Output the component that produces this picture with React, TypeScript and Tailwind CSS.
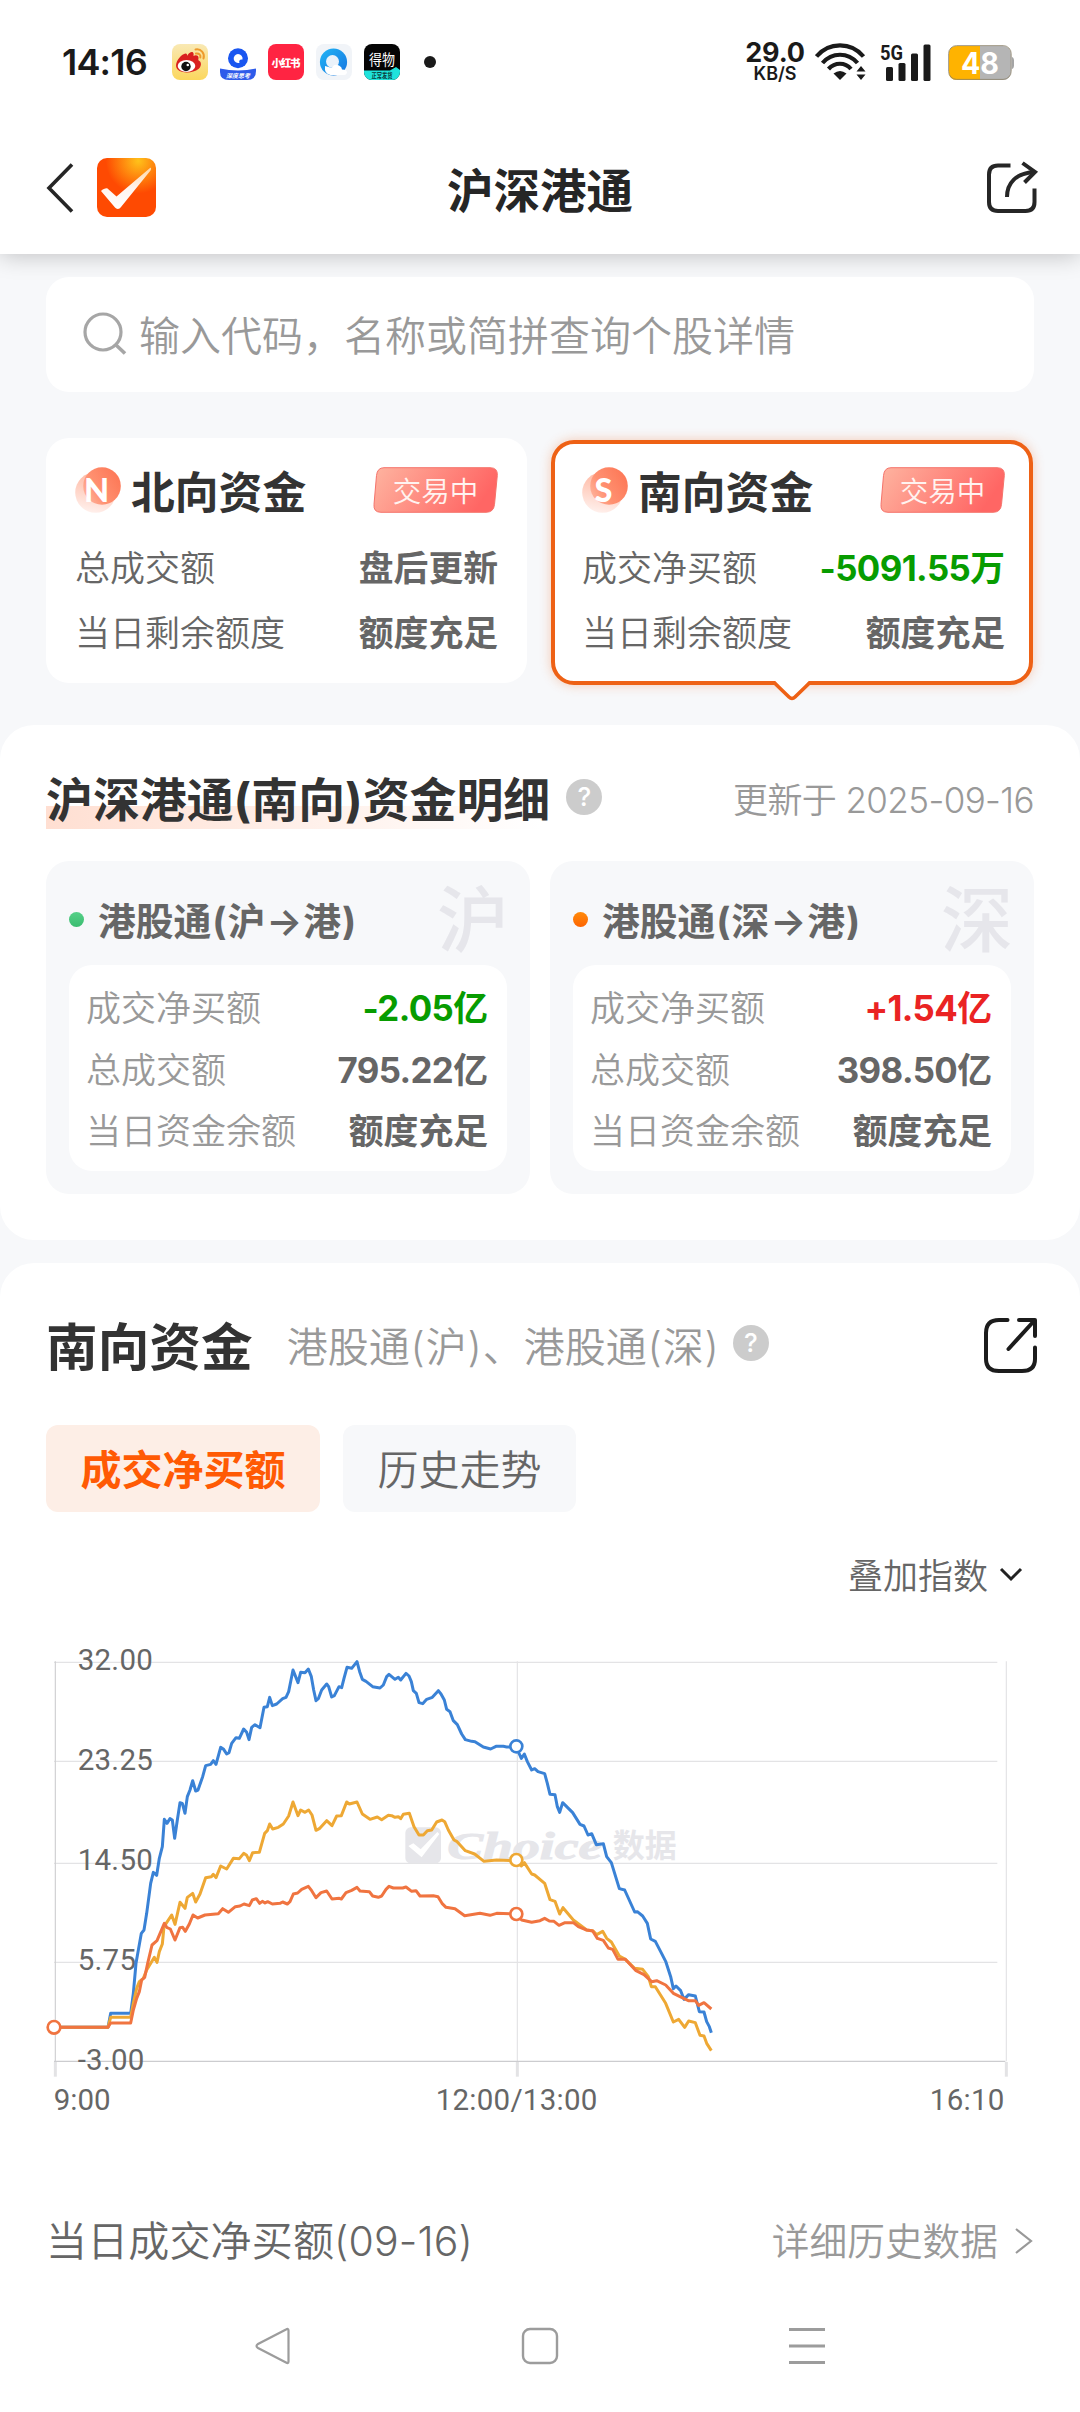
import React from 'react';

const FONT = "font-['Inter','Noto_Sans_CJK_SC',sans-serif]";

/* ---------- status bar ---------- */

function WeiboIcon() {
  return (
    <svg width="36" height="36" viewBox="0 0 36 36">
      <defs>
        <linearGradient id="wb" x1="0" y1="0" x2="0" y2="1">
          <stop offset="0" stopColor="#f9e9b4" />
          <stop offset="1" stopColor="#fbd75d" />
        </linearGradient>
      </defs>
      <rect width="36" height="36" rx="8" fill="url(#wb)" />
      <path d="M4 22C4 16 10 10 13.500 9.500C15 9.500 15.500 11 15.300 12C17 8 20 7.500 21 8.500C22 9.500 21.500 11 21.500 12C24 10.500 27 11.500 26.500 14.500C26 16 26.500 16.500 27.500 17C30 19 29 23 26.500 25C20 30 5 30 4 22Z" fill="#d9201f" />
      <ellipse cx="14.500" cy="22" rx="8.800" ry="6" fill="#fff" />
      <circle cx="14" cy="22.500" r="4.700" fill="#111" />
      <circle cx="15.800" cy="21" r="1.300" fill="#fff" />
      <path d="M23.500 5.500C29 4.500 33 9 31.500 14.500M24 9.500C27 9 29 11 28.300 13.500" fill="none" stroke="#ee9a2c" strokeWidth="2" strokeLinecap="round" />
    </svg>
  );
}

function ExamIcon() {
  return (
    <svg width="36" height="36" viewBox="0 0 36 36">
      <circle cx="18" cy="14.200" r="10" fill="#1a56f0" />
      <path d="M18 10A4.500 4.500 0 1 0 19.500 18.800C18.500 16.500 20 15 22.500 15.500A4.600 4.600 0 0 0 18 10Z" fill="#fff" />
      <path d="M0 24.500Q18 28.500 36 24.500V27Q36 36 27 36H9Q0 36 0 28Z" fill="#2e5bea" />
      <text x="18" y="34.200" fontSize="6" fontWeight="700" fontStyle="italic" fill="#fff" textAnchor="middle" fontFamily="Noto Sans CJK SC">深度思考</text>
    </svg>
  );
}

function RedIcon() {
  return (
    <svg width="36" height="36" viewBox="0 0 36 36">
      <rect width="36" height="36" rx="8" fill="#ff2442" />
      <text x="18" y="22.500" fontSize="10.500" fontWeight="900" fill="#fff" textAnchor="middle" textLength="29" fontFamily="Noto Sans CJK SC">小红书</text>
    </svg>
  );
}

function BrowserIcon() {
  return (
    <svg width="36" height="36" viewBox="0 0 36 36">
      <defs>
        <linearGradient id="qb" x1="0" y1="0" x2="1" y2="1">
          <stop offset="0" stopColor="#22b6f5" />
          <stop offset="1" stopColor="#1673e0" />
        </linearGradient>
      </defs>
      <rect width="36" height="36" rx="8" fill="#f1f4f8" />
      <circle cx="17.500" cy="18" r="13.600" fill="url(#qb)" />
      <circle cx="16.500" cy="17.500" r="6.500" fill="#eaf2fa" />
      <path d="M14.500 31Q8 30 9 22L16 24Q18 19 23 21.500Q26 23 26 25.500Q31 25.500 31 28.500Q30.500 31 28 31Z" fill="#fff" />
    </svg>
  );
}

function DewuIcon() {
  return (
    <svg width="36" height="36" viewBox="0 0 36 36">
      <defs>
        <clipPath id="dw"><rect width="36" height="36" rx="8" /></clipPath>
      </defs>
      <g clipPath="url(#dw)">
        <rect width="36" height="36" fill="#050505" />
        <path d="M0 26.500H26L32 23L36 26V36H0Z" fill="#1fe3dc" />
        <text x="18" y="20.500" fontSize="15" fill="#fff" textAnchor="middle" textLength="26" lengthAdjust="spacingAndGlyphs" fontFamily="Noto Sans CJK SC">得物</text>
        <text x="18" y="33.500" fontSize="6.500" fontWeight="700" fill="#0b3b3a" textAnchor="middle" textLength="21" lengthAdjust="spacingAndGlyphs" fontFamily="Noto Sans CJK SC">正常发货</text>
      </g>
    </svg>
  );
}

function StatusBar() {
  return (
    <div className="flex h-[124px] items-center pl-[62px] pr-[66px] text-[#1a1a1a]">
      <span className="w-[110px] text-[36px] font-semibold leading-[36px] tracking-[-0.8px]">14:16</span>
      <div className="flex items-center gap-[12px]">
        <WeiboIcon />
        <ExamIcon />
        <RedIcon />
        <BrowserIcon />
        <DewuIcon />
      </div>
      <span className="ml-[24px] size-[12px] rounded-full bg-[#1a1a1a]" />
      <div className="ml-auto flex items-center">
        <div className="flex w-[60px] flex-col items-center">
          <span className="text-[27px] font-bold leading-[20px] tracking-[-0.2px]">29.0</span>
          <span className="mt-[3px] text-[18px] font-semibold leading-[15px]">KB/S</span>
        </div>
        <svg className="ml-[10px]" width="52" height="38" viewBox="0 0 52 38">
          <g fill="none" stroke="#1a1a1a" strokeWidth="4.200">
            <path d="M1.500 13.500C14 -1.300 36 -1.300 48.500 13.500" />
            <path d="M7.500 20C17 9 33 9 42.500 20" />
            <path d="M13.500 26C20 19 30 19 36 26" />
          </g>
          <path d="M25 37L18.500 30.500Q25 25.500 31.500 30.500Z" fill="#1a1a1a" />
          <path d="M46 23L50.500 28.500H41.500ZM46 37L50.500 31.500H41.500Z" fill="#1a1a1a" />
        </svg>
        <svg className="ml-[13px] overflow-visible" width="54" height="38" viewBox="0 0 54 38">
          <text x="0" y="16.500" fontSize="20.500" fontWeight="700" fill="#1a1a1a" textLength="23" lengthAdjust="spacingAndGlyphs" fontFamily="Roboto">5G</text>
          <rect x="6" y="24" width="7" height="14" rx="1.500" fill="#1a1a1a" />
          <rect x="18.500" y="20" width="7" height="18" rx="1.500" fill="#1a1a1a" />
          <rect x="31" y="10.500" width="7" height="27.500" rx="1.500" fill="#1a1a1a" />
          <rect x="43.500" y="1.500" width="7" height="36.500" rx="1.500" fill="#1a1a1a" />
        </svg>
        <svg className="ml-[14px]" width="66" height="36" viewBox="0 0 66 36">
          <rect x="1" y="2" width="62" height="34" rx="8" fill="#b5b5b5" />
          <path d="M32 2H9Q1 2 1 10V28Q1 36 9 36H32Z" fill="#ffb300" />
          <rect x="0.600" y="1.600" width="62.600" height="33.800" rx="8" fill="none" stroke="#8a8068" strokeWidth="0.800" />
          <path d="M63.500 12.500Q66 13.500 66 16V22Q66 24.500 63.500 25.500Z" fill="#a5a5a5" />
          <text x="32" y="29.800" fontSize="29.500" fontWeight="700" fill="#fff" textAnchor="middle" fontFamily="Inter" textLength="38" lengthAdjust="spacingAndGlyphs">48</text>
        </svg>
      </div>
    </div>
  );
}

/* ---------- nav header ---------- */

function Header() {
  return (
    <div className="relative flex h-[130px] items-center justify-center bg-white">
      <div className="absolute left-[46px] top-[34px] flex items-center">
        <svg width="28" height="52" viewBox="0 0 28 52">
          <path d="M26 2.500L3 26L26 49.500" fill="none" stroke="#262626" strokeWidth="3.600" />
        </svg>
        <svg className="ml-[23px]" width="59" height="59" viewBox="0 0 59 59">
          <defs>
            <radialGradient id="app" cx="0.700" cy="0.050" r="0.550">
              <stop offset="0" stopColor="#ffc21a" />
              <stop offset="1" stopColor="#fe4a02" />
            </radialGradient>
            <linearGradient id="chk" x1="0" y1="0" x2="0" y2="1">
              <stop offset="0" stopColor="#ffd9a8" />
              <stop offset="0.500" stopColor="#fff4ee" />
              <stop offset="1" stopColor="#fff" />
            </linearGradient>
          </defs>
          <rect width="59" height="59" rx="10" fill="url(#app)" />
          <path d="M4 33C6 31 9 30 10.500 30.500L19.500 38.500L53 10C54 9 54.500 11 53.500 12.500L24 49C22.500 51.500 19.500 51.500 18 49.500Z" fill="url(#chk)" />
        </svg>
      </div>
      <h1 className="mt-[4px] text-[46.500px] font-bold leading-[60px] text-[#262626]">沪深港通</h1>
      <svg className="absolute left-[986px] top-[36px]" width="54" height="54" viewBox="0 0 54 54">
        <g fill="none" stroke="#262626" strokeWidth="4" strokeLinejoin="round">
          <path d="M24.500 5.500H12Q3 5.500 3 14.500V42Q3 51 12 51H39.500Q48.500 51 48.500 42V28.500" />
          <path d="M21 37C21 23 30 13 48.500 12" />
          <path d="M36.500 3L49 12L38.500 22.500" strokeLinejoin="miter" />
        </g>
      </svg>
    </div>
  );
}

/* ---------- fund cards ---------- */

function Emblem({ letter }: { letter: string }) {
  const id = `emblem-${letter}`;
  return (
    <svg width="46" height="46" viewBox="0 0 46 46">
      <defs>
        <linearGradient id={id} x1="1" y1="0.200" x2="0" y2="0.800">
          <stop offset="0" stopColor="#fd7655" />
          <stop offset="0.650" stopColor="#ff9272" />
          <stop offset="1" stopColor="#ffb5a0" />
        </linearGradient>
        <linearGradient id={`${id}-b`} x1="0.600" y1="0" x2="0.400" y2="1">
          <stop offset="0" stopColor="#ffb59e" />
          <stop offset="1" stopColor="#fff0ec" />
        </linearGradient>
      </defs>
      <circle cx="20.500" cy="25.500" r="20.300" fill={`url(#${id}-b)`} />
      <circle cx="27" cy="19" r="18.800" fill={`url(#${id})`} />
      <text x="21.500" y="34.500" fontSize="32.500" fontWeight="900" fill="#fff" textAnchor="middle" fontFamily="Lato">{letter}</text>
    </svg>
  );
}

function TradingBadge() {
  return (
    <div className="relative flex h-[46px] w-[125px] items-center justify-center">
      <svg className="absolute inset-0" width="125" height="46" viewBox="0 0 125 46">
        <defs>
          <linearGradient id="badge" x1="0" y1="0" x2="1" y2="0.250">
            <stop offset="0" stopColor="#feb4a0" />
            <stop offset="1" stopColor="#ff6664" />
          </linearGradient>
        </defs>
        <path d="M11 0.700H117Q125 0.700 124.300 8.500L121.500 37.500Q120.700 45.300 113 45.300H8Q0.300 45.300 1 37.500L3.500 8.500Q4.300 0.700 11 0.700Z" fill="url(#badge)" stroke="#f5736b" strokeWidth="1" />
      </svg>
      <span className="relative mt-[4px] text-[28.500px] font-[350] leading-[36px] text-[#fff3f0]">交易中</span>
    </div>
  );
}

type Row = { label: string; value: string; tone?: string };

/** Figures are set slightly tighter than the unit that follows them. */
function Value({ value, tone }: { value: string; tone?: string }) {
  const digits = value.match(/^[-+\d.]+/)?.[0] ?? '';
  return (
    <span className={`text-[34.800px] font-bold ${tone ?? 'text-[#666]'}`}>
      {digits && <span className="tracking-[-0.6px]">{digits}</span>}
      {value.slice(digits.length)}
    </span>
  );
}

function FundCard({ letter, name, rows, active }: { letter: string; name: string; rows: Row[]; active?: boolean }) {
  return (
    <div
      className={
        active
          ? 'relative mt-[2px] h-[245px] w-[482px] rounded-[23px] border-[4px] border-[#ee6115] bg-white pl-[27px] pr-[24px] pt-[23px] shadow-[0_0_12px_rgba(240,97,21,0.3)]'
          : 'h-[245px] w-[481px] rounded-[23px] bg-white pl-[29px] pr-[29px] pt-[29px]'
      }
    >
      <div className="flex h-[46px] items-center">
        <Emblem letter={letter} />
        <span className="ml-[10px] mt-[8px] text-[43.800px] font-bold leading-[46px] text-[#333]">{name}</span>
        <div className="ml-auto">
          <TradingBadge />
        </div>
      </div>
      <div className="mt-[23px] flex flex-col">
        {rows.map((r) => (
          <div key={r.label} className="flex h-[64.500px] items-center justify-between text-[35px] leading-[64px]">
            <span className="font-[350] text-[#666]">{r.label}</span>
            <Value value={r.value} tone={r.tone} />
          </div>
        ))}
      </div>
      {active && (
        <svg className="absolute left-[217px] top-[234px]" width="40" height="24" viewBox="0 0 40 24">
          <path d="M3 0V3L17 19Q20 22 23 19L37 3V0Z" fill="#fff" />
          <path d="M2 4.500L17 19Q20 22 23 19L38 4.500" fill="none" stroke="#ee6115" strokeWidth="3.600" />
        </svg>
      )}
    </div>
  );
}

/* ---------- detail section ---------- */

function Help() {
  return (
    <span className="flex size-[36px] items-center justify-center rounded-full bg-[#ccc] text-[26px] font-medium leading-[36px] text-white">?</span>
  );
}

function ChannelCard({ city, dot, rows }: { city: string; dot: string; rows: Row[] }) {
  return (
    <div className="h-[333px] w-[484px] rounded-[23px] bg-[#f7f8fa] px-[23px]">
      <div className="flex h-[104px] items-center">
        <span className={`mt-[13px] size-[15px] rounded-full ${dot}`} />
        <span className="ml-[14px] mt-[15px] flex text-[37.800px] font-bold leading-[40px] text-[#666]">
          港股通<span className="w-[16px] text-center">(</span>{city}
          <span className="w-[38px] text-center font-semibold">→</span>港<span className="w-[16px] text-center">)</span>
        </span>
        <span className="-mr-[2px] ml-auto mt-[13px] text-[72px] font-medium leading-[80px] text-[#e6e6eb]">{city}</span>
      </div>
      <div className="flex h-[206px] flex-col rounded-[23px] bg-white pl-[17px] pr-[19px] pt-[13px]">
        {rows.map((r) => (
          <div key={r.label} className="flex h-[61.500px] items-center justify-between text-[35px] leading-[61px]">
            <span className="font-[350] text-[#999]">{r.label}</span>
            <Value value={r.value} tone={r.tone} />
          </div>
        ))}
      </div>
    </div>
  );
}

function DetailSection() {
  return (
    <section className="mt-[40px] h-[515px] rounded-[34px] bg-white px-[46px] pt-[43px]">
      <div className="flex h-[64px] items-center">
        <div className="relative">
          <div className="absolute left-0 top-[38px] h-[23px] w-[495px] bg-linear-to-r from-[#ffdfd2] to-white" />
          <h2 className="relative whitespace-nowrap text-[46.900px] font-bold leading-[64px] text-[#333]">沪深港通(南向)资金明细</h2>
        </div>
        <div className="mb-[6px] ml-[16px]">
          <Help />
        </div>
        <span className="ml-auto text-[35px] font-[350] leading-[50px] tracking-[-0.600px] text-[#999]">更新于 2025-09-16</span>
      </div>
      <div className="mt-[29px] flex justify-between">
        <ChannelCard
          city="沪"
          dot="bg-linear-to-b from-[#55d088] to-[#3bbd70]"
          rows={[
            { label: '成交净买额', value: '-2.05亿', tone: 'text-[#079c00]' },
            { label: '总成交额', value: '795.22亿' },
            { label: '当日资金余额', value: '额度充足' },
          ]}
        />
        <ChannelCard
          city="深"
          dot="bg-linear-to-b from-[#ff8a0a] to-[#fd6402]"
          rows={[
            { label: '成交净买额', value: '+1.54亿', tone: 'text-[#ea2323]' },
            { label: '总成交额', value: '398.50亿' },
            { label: '当日资金余额', value: '额度充足' },
          ]}
        />
      </div>
    </section>
  );
}

/* ---------- chart ---------- */

/** Joins the early points with later ones that are measured from x = 1020. */
const series = (early: string, late: string) =>
  early +
  ' ' +
  late
    .split(' ')
    .map((p) => {
      const [x, y] = p.split(',').map(Number);
      return `${x + 1020},${y}`;
    })
    .join(' ');

const BLUE = series(
  '162,1222 324,1222 332,1180 392,1180 400,1120 408,1030 424,940 432,930 440,880 452,790 460,757 470,766 478,715 487,680 493,598 501,610 510,596 517,600 524,655 532,600 540,548 547,550 555,580 562,530 570,510 578,482 587,513 594,510 608,470 617,437 632,433 640,422 648,433 662,382 671,388 680,402 687,398 695,370 708,353 718,355 731,327 740,337 747,359 755,322 765,314 780,323 792,262 802,260 809,232 817,257 830,252 848,236 858,232 866,215 873,180 879,150 894,188 902,157 915,158 925,147 934,170 941,210 948,242 955,236 965,210 980,192 986,200 995,231 1003,227 1017,200 1025,203 1032,175 1041,142 1055,145 1071,125 1079,155 1087,178 1098,184 1118,200 1140,204 1150,195 1160,170 1167,163',
  '165,178 175,172 182,180 198,160 207,168 214,185 220,212 229,220 237,248 248,251 260,238 277,232 295,212 303,222 313,240 320,268 330,275 340,302 352,314 365,342 376,359 395,364 405,365 430,381 452,387 468,379 490,379 500,381 528,380 544,415 553,402 562,425 575,450 584,446 594,455 614,461 622,490 630,523 645,524 652,560 659,577 668,548 680,560 698,578 720,613 732,618 744,645 755,641 769,674 790,671 800,710 814,728 838,806 854,810 884,876 892,875 908,888 922,910 932,957 946,964 962,995 977,1024 992,1070 1000,1106 1008,1098 1022,1112 1032,1138 1046,1124 1066,1128 1078,1175 1092,1176 1100,1205 1108,1220 1114,1238',
);

const YELLOW = series(
  '162,1222 324,1222 332,1192 392,1192 400,1150 410,1105 418,1085 430,1075 440,1050 463,1012 471,1027 478,995 487,972 492,920 515,885 525,913 540,847 555,865 562,832 578,820 587,846 600,822 617,773 634,770 640,763 648,773 662,738 680,747 700,715 718,716 731,700 740,706 748,722 758,698 778,697 794,640 802,632 809,612 818,627 835,622 850,612 866,588 879,546 894,587 902,570 915,577 926,570 936,585 948,631 958,626 980,602 996,617 1010,588 1024,587 1040,546 1048,552 1071,546 1087,582 1110,598 1132,591 1145,599 1165,586',
  '155,587 165,592 175,590 182,596 190,583 208,580 222,620 237,645 250,645 262,632 275,630 290,606 306,600 314,605 325,630 342,660 350,664 376,692 404,702 432,724 470,720 528,722 544,738 553,728 575,762 584,765 614,790 630,839 645,844 659,882 669,863 700,900 740,930 758,932 770,944 788,934 800,955 814,966 838,1008 856,1018 884,1045 908,1048 925,1070 934,1100 946,1100 977,1150 1000,1206 1016,1198 1034,1222 1046,1203 1066,1208 1080,1246 1092,1248 1100,1270 1114,1292',
);

const ORANGE = series(
  '162,1222 324,1222 332,1209 392,1209 400,1170 410,1135 418,1115 425,1080 434,1072 443,1030 456,975 471,962 493,910 500,922 511,927 525,960 540,923 548,922 556,934 568,912 579,885 593,894 615,885 655,881 668,866 685,877 706,860 720,858 732,852 748,857 757,840 769,836 779,850 787,844 795,849 803,845 817,852 840,850 848,846 862,852 870,845 880,822 893,819 905,808 925,799 935,812 948,833 963,818 980,813 996,837 1018,835 1024,837 1038,818 1055,811 1071,802 1080,813 1108,815 1118,828 1135,832 1145,828 1158,808 1167,799',
  '160,804 188,804 198,801 215,814 228,812 240,828 280,827 294,830 306,850 318,862 345,866 374,887 420,880 450,886 470,880 528,882 545,900 575,907 600,902 614,895 628,903 642,904 657,916 675,908 700,908 715,920 740,930 758,933 772,955 790,961 805,984 818,988 834,1018 856,1018 888,1052 912,1064 935,1085 950,1082 977,1095 1000,1120 1020,1130 1045,1142 1066,1142 1076,1156 1092,1148 1114,1167',
);

const Y_LABELS: [string, number][] = [
  ['32.00', 150],
  ['23.25', 450],
  ['14.50', 749],
  ['5.75', 1049],
  ['-3.00', 1351],
];

function Chart() {
  return (
    <svg className="block" width="1080" height="520" viewBox="0 0 3240 1560">
      <g stroke="#e3e3e5" strokeWidth="3.500">
        {[127, 424, 730, 1027].map((y) => (
          <line key={y} x1="162" x2="2992" y1={y} y2={y} />
        ))}
        <line x1="1552" x2="1552" y1="124" y2="1324" />
        <line x1="3019" x2="3019" y1="124" y2="1324" />
      </g>
      <line x1="166" x2="166" y1="124" y2="1324" stroke="#cfcfd1" strokeWidth="3.500" />
      <line x1="162" x2="3016" y1="1324" y2="1324" stroke="#cccccf" strokeWidth="4" />
      <g stroke="#e3e3e5" strokeWidth="9">
        <line x1="166" x2="166" y1="1326" y2="1370" />
        <line x1="1552" x2="1552" y1="1326" y2="1370" />
        <line x1="3019" x2="3019" y1="1326" y2="1370" />
      </g>

      <g fill="#e6e6ea">
        <rect x="1216" y="622" width="107" height="108" rx="16" />
        <path d="M1225 678L1240 670L1262 688L1312 636L1318 642L1265 712Z" fill="#fff" />
        <text x="1342" y="716" fontSize="112" fontWeight="900" fontStyle="italic" fontFamily="Liberation Serif" stroke="#e6e6ea" strokeWidth="3" textLength="465" lengthAdjust="spacingAndGlyphs">Choice</text>
        <text x="1838" y="710" fontSize="96" fontWeight="700" fontFamily="Noto Sans CJK SC">数据</text>
      </g>

      <g fill="#666" fontFamily="Roboto" fontSize="88.500">
        {Y_LABELS.map(([t, y]) => (
          <text key={t} x="233" y={y} letterSpacing="0.800">{t}</text>
        ))}
        <text x="161" y="1469">9:00</text>
        <text x="1550" y="1469" textAnchor="middle" letterSpacing="0.800">12:00/13:00</text>
        <text x="3014" y="1469" textAnchor="end" letterSpacing="0.800">16:10</text>
      </g>

      <g fill="none" strokeWidth="9" strokeLinejoin="round">
        <polyline points={BLUE} stroke="#3a82d6" />
        <polyline points={YELLOW} stroke="#eea834" />
        <polyline points={ORANGE} stroke="#f07440" />
      </g>
      <g fill="#fff" strokeWidth="8">
        <circle cx="1549" cy="379" r="18" stroke="#3a82d6" />
        <circle cx="1549" cy="720" r="18" stroke="#eea834" />
        <circle cx="1549" cy="882" r="18" stroke="#f07440" />
        <circle cx="162" cy="1222" r="19" stroke="#f07440" />
      </g>
    </svg>
  );
}

function TrendSection() {
  return (
    <section className="mt-[23px] h-[1149px] rounded-t-[34px] bg-white pt-[53px]">
      <div className="flex h-[60px] items-center pl-[46px]">
        <h2 className="mt-[2px] text-[51.700px] font-bold leading-[60px] text-[#333]">南向资金</h2>
        <span className="ml-[34px] mt-[2px] flex text-[41px] font-[350] leading-[60px] text-[#999]">
          港股通<span className="w-[16px] text-center">(</span>沪<span className="w-[16px] text-center">)</span>、港股通
          <span className="w-[16px] text-center">(</span>深<span className="w-[16px] text-center">)</span>
        </span>
        <div className="mb-[6px] ml-[13px]">
          <Help />
        </div>
        <svg className="mb-[2px] ml-auto mr-[40px]" width="58" height="58" viewBox="0 0 58 58">
          <g fill="none" stroke="#1c1c1c" strokeWidth="4" strokeLinecap="round" strokeLinejoin="round">
            <path d="M25.500 4H17Q4 4 4 17V43Q4 55 17 55H40Q53 55 53 43V31.500" />
            <path d="M37 4H53V20M52 5L26.500 33" />
          </g>
        </svg>
      </div>
      <div className="mt-[49px] flex gap-[23px] pl-[46px] text-[41px] leading-[90px]">
        <div className="h-[87px] w-[274px] rounded-[12px] bg-[#fdeee6] text-center font-bold text-[#ff5a04]">成交净买额</div>
        <div className="h-[87px] w-[233px] rounded-[12px] bg-[#f7f8fa] text-center font-[350] text-[#666]">历史走势</div>
      </div>
      <div className="mt-[34px] flex h-[60px] items-center justify-end pr-[57px] text-[35px] font-[350] leading-[60px] text-[#666]">
        叠加指数
        <svg className="mb-[3px] ml-[11px]" width="24" height="16" viewBox="0 0 24 16">
          <path d="M2 2L12 12L22 2" fill="none" stroke="#222" strokeWidth="3" />
        </svg>
      </div>
      <div className="mt-[14px]">
        <Chart />
      </div>
      <div className="mt-[71px] flex h-[60px] items-center justify-between pl-[46px] pr-[46px]">
        <span className="text-[41px] font-[350] leading-[60px] tracking-[0.150px] text-[#666]">当日成交净买额(09-16)</span>
        <span className="flex items-center text-[37.700px] font-[350] leading-[60px] text-[#999]">
          详细历史数据
          <svg className="ml-[16px]" width="20" height="26" viewBox="0 0 20 26">
            <path d="M2 1L17 13L2 25" fill="none" stroke="#999" strokeWidth="2.200" />
          </svg>
        </span>
      </div>
    </section>
  );
}

function SystemNav() {
  return (
    <div className="flex h-[132px] shrink-0 items-center gap-[230px] bg-white pl-[254px]">
      <svg width="37" height="38" viewBox="0 0 37 38">
        <path d="M34.500 3.500V34.500Q34.500 37 32 35.500L4 21Q1 19 4 17L32 2.500Q34.500 1 34.500 3.500Z" fill="none" stroke="#9c9c9c" strokeWidth="2.200" />
      </svg>
      <svg width="38" height="38" viewBox="0 0 38 38">
        <rect x="2" y="2" width="34" height="34" rx="7" fill="none" stroke="#9c9c9c" strokeWidth="2.400" />
      </svg>
      <svg width="36" height="38" viewBox="0 0 36 38">
        <path d="M0 2.500H36M0 19H36M0 35.500H36" stroke="#9c9c9c" strokeWidth="3" />
      </svg>
    </div>
  );
}

export default function App() {
  return (
    <div className={`flex h-[2412px] w-[1080px] flex-col overflow-hidden bg-[#f7f8fa] ${FONT}`}>
      <header className="relative shrink-0 bg-white shadow-[0_2px_22px_rgba(0,0,0,0.22)]">
        <StatusBar />
        <Header />
      </header>
      <main className="h-[2026px] shrink-0 overflow-hidden">
        <div className="relative mx-[46px] mt-[23px] flex h-[115px] items-center rounded-[23px] bg-white pl-[36px]">
          <svg width="46" height="46" viewBox="0 0 46 46">
            <circle cx="21" cy="20" r="18" fill="none" stroke="#a6a6a6" strokeWidth="3.200" />
            <path d="M34 33L43 41.500" stroke="#a6a6a6" strokeWidth="3.600" />
          </svg>
          <span className="ml-[11px] mt-[2px] text-[41px] font-[350] leading-[60px] text-[#999]">输入代码，名称或简拼查询个股详情</span>
        </div>
        <div className="mt-[46px] flex justify-between pl-[46px] pr-[47px]">
          <FundCard
            letter="N"
            name="北向资金"
            rows={[
              { label: '总成交额', value: '盘后更新' },
              { label: '当日剩余额度', value: '额度充足' },
            ]}
          />
          <FundCard
            active
            letter="S"
            name="南向资金"
            rows={[
              { label: '成交净买额', value: '-5091.55万', tone: 'text-[#079c00]' },
              { label: '当日剩余额度', value: '额度充足' },
            ]}
          />
        </div>
        <DetailSection />
        <TrendSection />
      </main>
      <SystemNav />
    </div>
  );
}
